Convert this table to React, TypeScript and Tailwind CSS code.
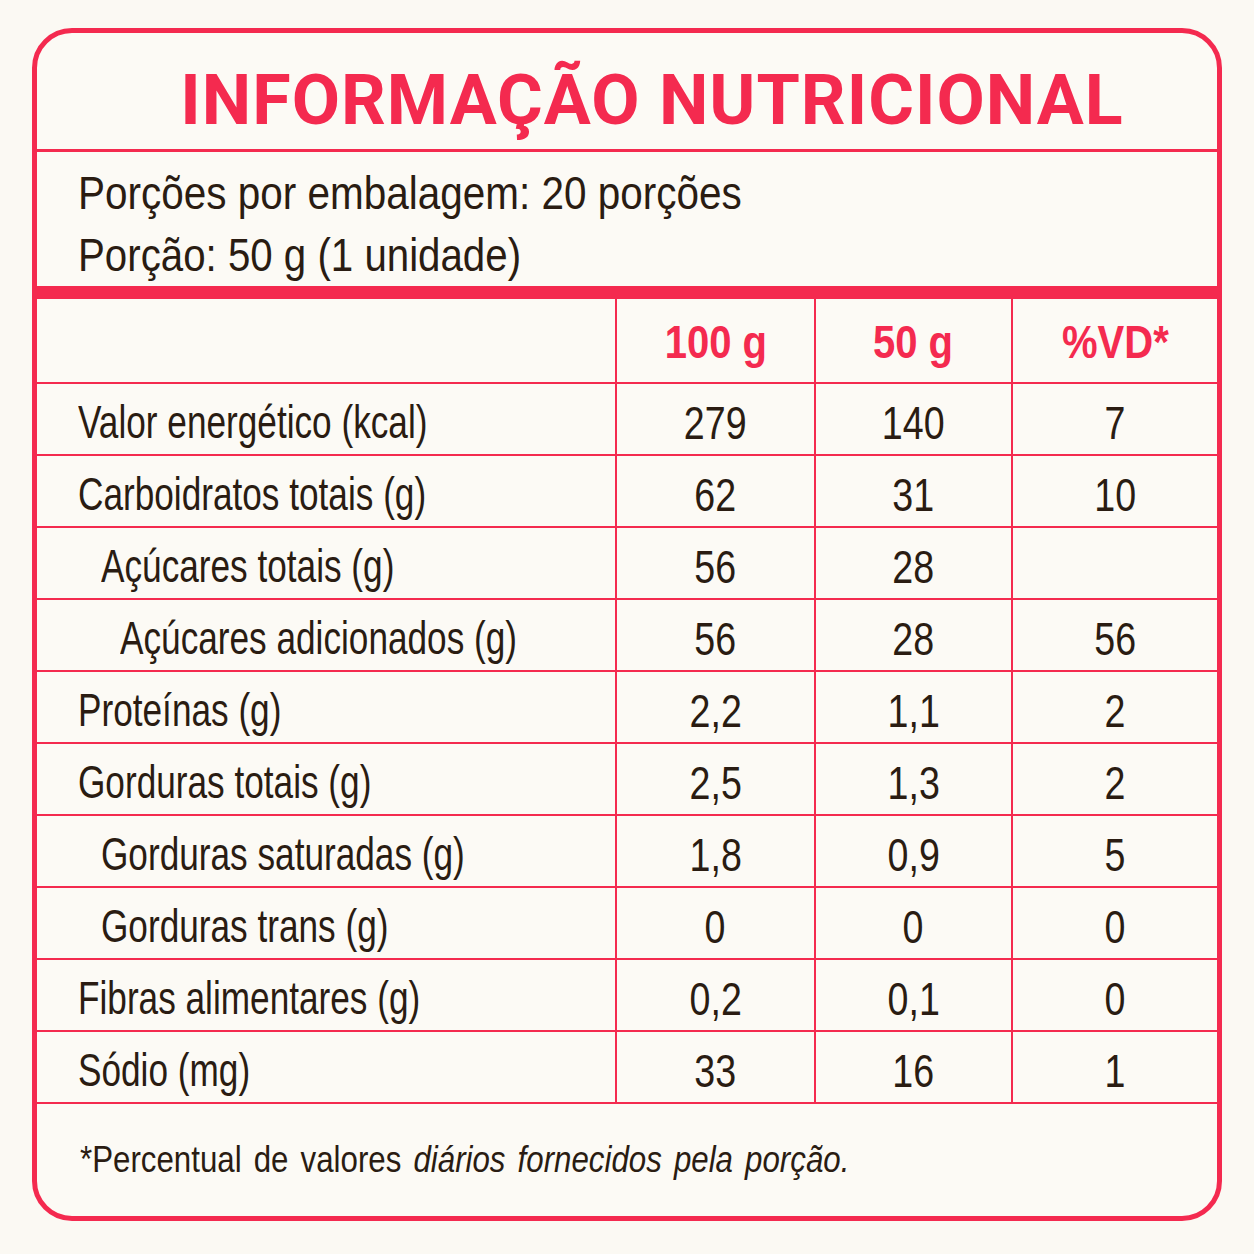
import React from "react";

type Row = { label: string; indent: 0 | 1 | 2; a: string; b: string; c: string };

const rows: Row[] = [
  { label: "Valor energético (kcal)", indent: 0, a: "279", b: "140", c: "7" },
  { label: "Carboidratos totais (g)", indent: 0, a: "62", b: "31", c: "10" },
  { label: "Açúcares totais (g)", indent: 1, a: "56", b: "28", c: "" },
  { label: "Açúcares adicionados (g)", indent: 2, a: "56", b: "28", c: "56" },
  { label: "Proteínas (g)", indent: 0, a: "2,2", b: "1,1", c: "2" },
  { label: "Gorduras totais (g)", indent: 0, a: "2,5", b: "1,3", c: "2" },
  { label: "Gorduras saturadas (g)", indent: 1, a: "1,8", b: "0,9", c: "5" },
  { label: "Gorduras trans (g)", indent: 1, a: "0", b: "0", c: "0" },
  { label: "Fibras alimentares (g)", indent: 0, a: "0,2", b: "0,1", c: "0" },
  { label: "Sódio (mg)", indent: 0, a: "33", b: "16", c: "1" },
];

const indentClass = ["pl-[41px]", "pl-[64px]", "pl-[83px]"];

const body = "font-['Liberation_Sans',Arial,sans-serif]";

function Num({ v }: { v: string }) {
  return (
    <div className="flex items-center justify-center border-l-2 border-[#f42a4f] pt-[6px]">
      <span className={`inline-block text-[47px] leading-none scale-x-[0.8] origin-center ${body}`}>{v}</span>
    </div>
  );
}

function Head({ v }: { v: string }) {
  return (
    <div className="flex items-center justify-center border-l-2 border-[#f42a4f] pt-[3px]">
      <span className={`inline-block text-[46px] leading-none font-bold text-[#f42a4f] scale-x-[0.87] origin-center ${body}`}>
        {v}
      </span>
    </div>
  );
}

export default function App() {
  return (
    <div className="w-[1254px] h-[1254px] bg-[#fbf9f3] pt-[28px] pl-[32px] text-[#2a1c12]">
      <div className="w-[1190px] h-[1193px] border-[5px] border-[#f42a4f] rounded-[40px] overflow-hidden flex flex-col bg-[#fcfaf5]">
        {/* Title */}
        <div className="h-[119px] border-b-[3px] border-[#f42a4f] flex items-center justify-center pt-[17px] pl-[50px]">
          <h1 className="font-['Roboto',sans-serif] font-bold text-[70px] leading-none tracking-[1px] text-[#f42a4f] whitespace-nowrap">
            INFORMAÇÃO NUTRICIONAL
          </h1>
        </div>
        {/* Serving */}
        <div className="h-[147px] border-b-[13px] border-[#f42a4f] pl-[41px] pt-[10px] flex flex-col">
          <div className="h-[62px] flex items-center">
            <span className={`inline-block text-[46px] leading-none scale-x-[0.88] origin-left whitespace-nowrap ${body}`}>
              Porções por embalagem: 20 porções
            </span>
          </div>
          <div className="h-[62px] flex items-center">
            <span className={`inline-block text-[46px] leading-none scale-x-[0.875] origin-left whitespace-nowrap ${body}`}>
              Porção: 50 g (1 unidade)
            </span>
          </div>
        </div>
        {/* Header */}
        <div className="grid grid-cols-[578px_199px_197px_1fr] h-[85px] border-b-2 border-[#f42a4f]">
          <div />
          <Head v="100 g" />
          <Head v="50 g" />
          <Head v="%VD*" />
        </div>
        {rows.map((r, i) => (
          <div key={i} className="grid grid-cols-[578px_199px_197px_1fr] h-[72px] border-b-2 border-[#f42a4f]">
            <div className={`flex items-center pt-[6px] ${indentClass[r.indent]}`}>
              <span className={`inline-block text-[46px] leading-none scale-x-[0.765] origin-left whitespace-nowrap ${body}`}>
                {r.label}
              </span>
            </div>
            <Num v={r.a} />
            <Num v={r.b} />
            <Num v={r.c} />
          </div>
        ))}
        {/* Footer */}
        <div className="flex-1 flex items-center pl-[43px] pb-[2px]">
          <span className={`inline-block text-[37px] leading-none scale-x-[0.845] origin-left whitespace-nowrap [word-spacing:4px] ${body}`}>
            *Percentual de valores <em className="italic">diários fornecidos pela porção.</em>
          </span>
        </div>
      </div>
    </div>
  );
}
